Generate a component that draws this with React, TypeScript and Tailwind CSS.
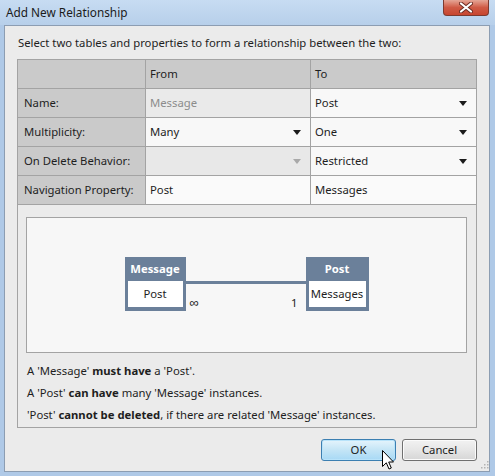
import React from "react";

const ui = "font-['Segoe_UI','Noto_Sans',sans-serif]";

function Arrow({ muted }: { muted?: boolean }) {
  return (
    <svg width="8" height="5" viewBox="0 0 8 5" className="shrink-0">
      <path d="M0 0h8L4 5z" fill={muted ? "#a9a9a9" : "#1b1b1b"} />
    </svg>
  );
}

type CellProps = {
  children?: React.ReactNode;
  bg: string;
  muted?: boolean;
  arrow?: "on" | "off";
};

const Cell = ({ children, bg, muted, arrow }: CellProps) => (
  <div
    className={`flex items-center justify-between pl-[4px] pr-[9px] border-r border-b border-[#a3a3a3] ${bg} ${
      muted ? "text-[#8c8c8c]" : "text-[#1e1e1e]"
    }`}
  >
    <span>{children}</span>
    {arrow && <Arrow muted={arrow === "off"} />}
  </div>
);

const Label = ({ children }: { children?: React.ReactNode }) => (
  <div className="flex items-center pl-[6px] border-r border-b border-[#a3a3a3] bg-[#cacaca] text-[#1e1e1e]">
    {children}
  </div>
);

const Entity = ({ title, field, w }: { title: string; field: string; w: string }) => (
  <div className={`flex flex-col bg-[#6b809a] px-[3px] pb-[4px] ${w}`}>
    <div className="h-[24px] flex items-center justify-center text-white font-bold">{title}</div>
    <div className="h-[26px] flex items-center justify-center bg-white text-[#1e1e1e]">{field}</div>
  </div>
);

export default function App() {
  return (
    <div className={`relative w-[495px] h-[476px] overflow-hidden bg-[#afc9e7] text-[11.3px] ${ui}`}>
      {/* Title bar */}
      <div className="h-[25px] flex items-center pl-[6px] bg-gradient-to-b from-[#c7dcf2] to-[#b7cfea] text-[#1b1b1b] text-[11.8px]">
        Add New Relationship
      </div>
      <div className="absolute top-0 left-[443px] w-[46px] h-[16px] rounded-b-[4px] border border-t-0 border-[#7d3a2f] bg-gradient-to-b from-[#e4a596] via-[#cf5a45] to-[#c7452f] flex items-center justify-center">
        <svg width="14" height="11" viewBox="0 0 14 11">
          <path d="M2 1.5l10 8M12 1.5l-10 8" stroke="#6b2b22" strokeWidth="4" strokeLinecap="round" />
          <path d="M2 1.5l10 8M12 1.5l-10 8" stroke="#ffffff" strokeWidth="2.2" strokeLinecap="round" />
        </svg>
      </div>

      {/* Client */}
      <div className="ml-[4px] w-[486px] h-[447px] border border-[#8c9db2] bg-[#ebebeb] px-[12px] pt-[8px] flex flex-col">
        <div className="h-[18px] leading-[18px] pl-[1px] mb-[7px] text-[#1e1e1e]">
          Select two tables and properties to form a relationship between the two:
        </div>

        <div className="border border-[#a3a3a3] border-r-0 flex flex-col">
          <div className="grid grid-cols-[128px_165px_1fr] auto-rows-[29px]">
            <Label />
            <Cell bg="bg-[#cacaca]">From</Cell>
            <Cell bg="bg-[#cacaca]">To</Cell>

            <Label>Name:</Label>
            <Cell bg="bg-[#eaeaea]" muted>Message</Cell>
            <Cell bg="bg-[#f8f8f8]" arrow="on">Post</Cell>

            <Label>Multiplicity:</Label>
            <Cell bg="bg-[#f8f8f8]" arrow="on">Many</Cell>
            <Cell bg="bg-[#f8f8f8]" arrow="on">One</Cell>

            <Label>On Delete Behavior:</Label>
            <Cell bg="bg-[#e8e8e8]" arrow="off" />
            <Cell bg="bg-[#f8f8f8]" arrow="on">Restricted</Cell>

            <Label>Navigation Property:</Label>
            <Cell bg="bg-[#fafafa]">Post</Cell>
            <Cell bg="bg-[#fafafa]">Messages</Cell>
          </div>

          <div className="border-r border-[#a3a3a3] flex flex-col pb-[1px]">
            {/* Diagram */}
            <div className="mt-[12px] ml-[8px] mr-[9px] h-[136px] border border-[#a3a3a3] bg-[#f7f7f7] flex items-center justify-center">
              <div className="flex items-start">
                <Entity title="Message" field="Post" w="w-[61px]" />
                <div className="w-[120px] pt-[24px] flex flex-col">
                  <div className="h-[3px] bg-[#6b809a]" />
                  <div className="flex justify-between items-center pl-[4px] pr-[8px] mt-[9px] text-[#1e1e1e]">
                    <span className="text-[13px]">∞</span>
                    <span>1</span>
                  </div>
                </div>
                <Entity title="Post" field="Messages" w="w-[63px]" />
              </div>
            </div>

            {/* Summary */}
            <div className="mt-[7px] pl-[9px] leading-[22px] text-[#1e1e1e]">
              <div>
                A 'Message' <b>must have</b> a 'Post'.
              </div>
              <div>
                A 'Post' <b>can have</b> many 'Message' instances.
              </div>
              <div>
                'Post' <b>cannot be deleted</b>, if there are related 'Message' instances.
              </div>
            </div>
          </div>
        </div>

        {/* Buttons */}
        <div className="mt-[11px] flex justify-end gap-[6px]">
          <button className="w-[75px] h-[22px] rounded-[3px] border border-[#3c7fb1] bg-gradient-to-b from-[#e5f4fc] via-[#c4e5f6] to-[#a7d9f5] text-[#1e1e1e] shadow-[inset_0_0_0_1px_#b8e3fa]">
            OK
          </button>
          <button className="w-[75px] h-[22px] rounded-[3px] border border-[#707070] bg-gradient-to-b from-[#f2f2f2] via-[#e6e6e6] to-[#d6d6d6] text-[#1e1e1e] shadow-[inset_0_0_0_1px_#fbfbfb]">
            Cancel
          </button>
        </div>
      </div>

      {/* Resize grip */}
      <svg className="absolute left-[480px] top-[460px]" width="9" height="9" viewBox="0 0 9 9">
        {[
          [7, 1],
          [4, 4],
          [7, 4],
          [1, 7],
          [4, 7],
          [7, 7],
        ].map(([x, y], i) => (
          <rect key={i} x={x} y={y} width="1.5" height="1.5" fill="#b3b3b3" />
        ))}
      </svg>

      {/* Mouse cursor */}
      <svg className="absolute left-[382px] top-[450px]" width="13" height="21" viewBox="0 0 13 21">
        <path
          d="M0.5 0.5 L0.5 16.5 L4.3 12.8 L7 19 L9.3 18 L6.7 12 L11.5 12 Z"
          fill="#ffffff"
          stroke="#000000"
          strokeWidth="1"
          strokeLinejoin="miter"
        />
      </svg>
    </div>
  );
}
